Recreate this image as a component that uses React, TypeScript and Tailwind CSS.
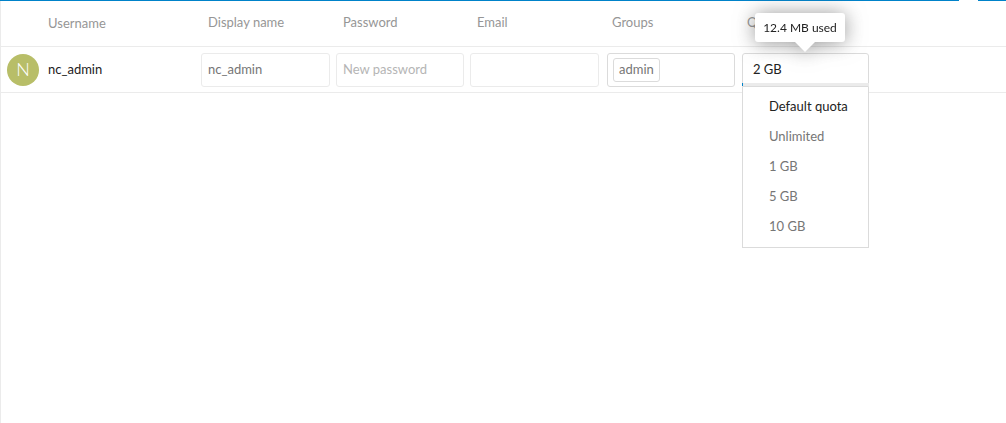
import React from 'react';

const quotas = ['Default quota', 'Unlimited', '1 GB', '5 GB', '10 GB'];

const fieldClass =
  'block h-[34px] w-full rounded-[3px] border border-[#ebebeb] bg-white px-1.5 pb-0.5 text-[13px] text-[#767676] placeholder:text-[#b5b5b5] outline-none';

const headClass = 'border-b border-[#ebebeb] pt-0 pr-0 pb-0.5 pl-2.5 font-normal';
const selectHeadClass = 'border-b border-[#ebebeb] pt-0 pr-0 pb-0.5 pl-[9px] font-normal';

function QuotaPicker() {
  return (
    <div className="relative">
      <input
        type="text"
        role="combobox"
        aria-label="Quota"
        aria-expanded="true"
        aria-controls="quota-options"
        defaultValue="2 GB"
        className="block h-[34px] w-full rounded-t-[3px] border border-[#dbdbdb] bg-white px-2.5 pb-0.5 text-[13px] text-[#222222] outline-none"
      />
      <div className="absolute inset-x-0 bottom-px h-[3px] bg-[#ebebeb]">
        <div className="h-full w-px bg-[#0082c9]" />
      </div>
      <div
        role="tooltip"
        className="absolute right-6 bottom-full mb-[11px] flex h-[29px] w-[90px] items-center justify-center rounded-[3px] bg-white pt-0.5 text-[12px] whitespace-nowrap text-[#222222] drop-shadow-[0_1px_10px_#4d4d4d99]"
      >
        12.4 MB used
        <svg className="absolute top-full right-[30px] h-2.5 w-5" viewBox="0 0 20 10" aria-hidden="true">
          <path d="M0 0H20L10 10Z" fill="#fff" />
        </svg>
      </div>
      <ul
        id="quota-options"
        role="listbox"
        aria-label="Quota"
        className="absolute top-full right-0 left-0 border border-t-0 border-[#dbdbdb] bg-white pt-[5px] pb-[5px]"
      >
        {quotas.map((quota, i) => (
          <li
            key={quota}
            role="option"
            aria-selected={i === 0}
            className={
              i === 0
                ? 'flex h-[30px] items-center pl-[26px] whitespace-nowrap text-[#222222]'
                : 'flex h-[30px] items-center pl-[26px] whitespace-nowrap text-[#767676]'
            }
          >
            {quota}
          </li>
        ))}
      </ul>
    </div>
  );
}

export default function App() {
  return (
    <div className="flex min-h-screen flex-col bg-white font-[Lato,'Noto_Sans',sans-serif] text-[13px] text-[#222222]">
      <header className="flex h-px justify-end bg-[#0082c9] pr-7">
        <div className="h-px w-[19px] bg-white" />
      </header>
      <main className="flex-1 border-l border-[#ebebeb]">
        <table className="w-full table-fixed border-separate border-spacing-0">
          <colgroup>
            <col className="w-[47px]" />
            <col className="w-[150px]" />
            <col className="w-[135px]" />
            <col className="w-[134px]" />
            <col className="w-[136px]" />
            <col className="w-[135px]" />
            <col className="w-[131px]" />
            <col />
          </colgroup>
          <thead>
            <tr className="h-[46px] text-left text-[#969696]">
              <td className="border-b border-[#ebebeb]" />
              <th scope="col" className="border-b border-[#ebebeb] p-0 font-normal">
                Username
              </th>
              <th scope="col" className={headClass}>
                Display name
              </th>
              <th scope="col" className={headClass}>
                Password
              </th>
              <th scope="col" className={headClass}>
                Email
              </th>
              <th scope="col" className={selectHeadClass}>
                Groups
              </th>
              <th scope="col" className={selectHeadClass}>
                Quota
              </th>
              <td className="border-b border-[#ebebeb]" />
            </tr>
          </thead>
          <tbody>
            <tr className="h-[46px]">
              <td className="border-b border-[#ebebeb] py-0 pr-0 pl-1.5">
                <div className="flex size-8 items-center justify-center rounded-full bg-[#b8be68] text-[18px] font-light text-white">
                  N
                </div>
              </td>
              <th scope="row" className="border-b border-[#ebebeb] p-0 text-left font-normal">
                nc_admin
              </th>
              <td className="border-b border-[#ebebeb] px-[3px] py-0">
                <input type="text" aria-label="Display name" defaultValue="nc_admin" className={fieldClass} />
              </td>
              <td className="border-b border-[#ebebeb] px-[3px] py-0">
                <input type="password" aria-label="Password" placeholder="New password" className={fieldClass} />
              </td>
              <td className="border-b border-[#ebebeb] py-0 pr-1 pl-[3px]">
                <input type="email" aria-label="Email" className={fieldClass} />
              </td>
              <td className="border-b border-[#ebebeb] py-0 pr-[3px] pl-1">
                <div className="flex h-[34px] items-center rounded-[3px] border border-[#dbdbdb] px-[5px]">
                  <span className="flex h-6 items-center rounded-[3px] border border-[#dbdbdb] px-[5px] text-[#767676]">
                    admin
                  </span>
                </div>
              </td>
              <td className="border-b border-[#ebebeb] py-0 pr-0 pl-1">
                <QuotaPicker />
              </td>
              <td className="border-b border-[#ebebeb]" />
            </tr>
          </tbody>
        </table>
      </main>
    </div>
  );
}
